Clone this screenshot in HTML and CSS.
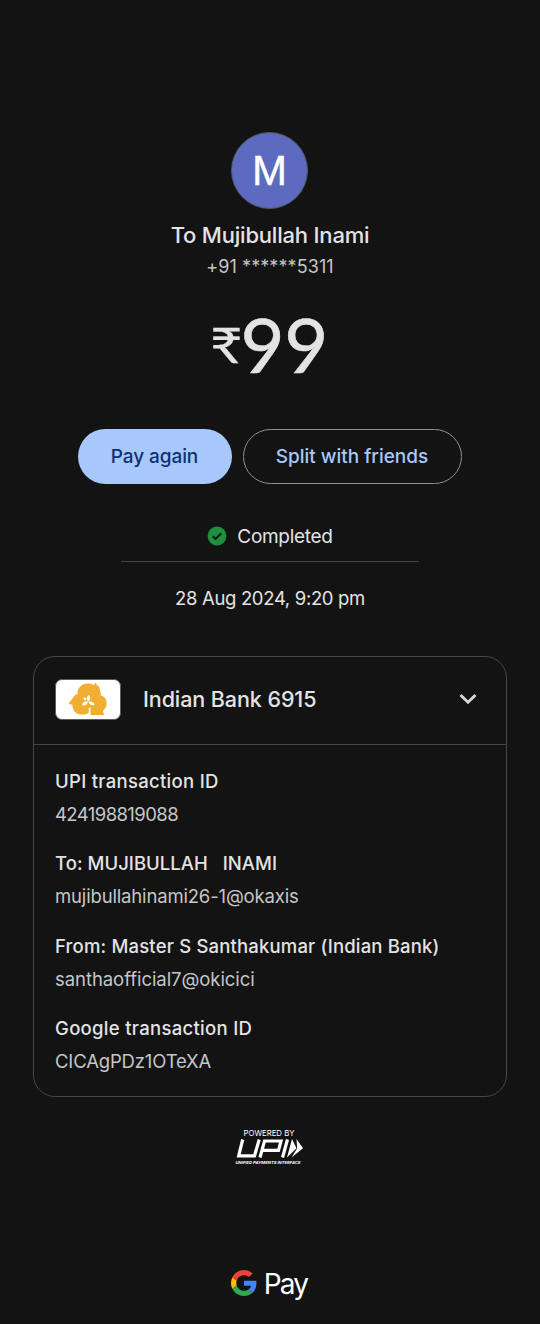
FILE: index.html
```html
<!DOCTYPE html>
<html lang="en">
<head>
<meta charset="utf-8">
<title>Payment receipt</title>
<link rel="stylesheet" href="styles.css">
</head>
<body>
<main class="screen">
  <div class="avatar">M</div>
  <h1 class="payee">To Mujibullah Inami</h1>
  <p class="phone">+91 ******5311</p>
  <p class="amount"><span class="rupee">₹</span><span class="value">99</span></p>
  <div class="actions">
    <button class="btn btn-primary">Pay again</button>
    <button class="btn btn-outline">Split with friends</button>
  </div>
  <div class="status">
    <svg class="check" viewBox="0 0 20 20"><circle cx="10" cy="10" r="9.4" fill="#1e9140"/><path d="M5.800 10.200l2.800 2.700 5.600-5.600" fill="none" stroke="#131314" stroke-width="2"/></svg>
    <span>Completed</span>
  </div>
  <p class="date">28 Aug 2024, 9:20 pm</p>
  <section class="card">
    <header class="bank">
      <span class="bank-logo">
        <svg viewBox="0 0 64 38">
          <g fill="#f2ae30">
            <path d="M21.500 15C20.500 8 26 3.500 32 3.500c2.500 0 4.500.6 6 1.600L39.700 2.500 41 5.200l2 1L45 14.500l-5 2-5 4-8 1z"/>
            <path d="M12.500 23.500L20 14l6 3 2 7 5 3-.5 6C29.500 34.800 25.500 35 22.500 34c-4-1.300-6-4.600-6-9z"/>
            <path d="M35 17.500l5-3 5 .8c4 1.500 6 5 5.600 9-.3 3-1.600 5-3.800 6.500l1.400 4.200H34.500V25z"/>
            <circle cx="32" cy="21" r="7"/>
          </g>
          <g fill="#fff">
            <path d="M32.300 21.500c-2-2-1.800-5 .3-6.500 2.300 1.500 2.300 4.500-.3 6.500z"/>
            <path d="M32 21.500c-.7 3-3 4.500-5.800 3.700.3-2.800 2.800-4.300 5.800-3.700z"/>
            <path d="M32.500 21.700c3-.9 5.600.4 6 3.200-2.900 1.100-5.300-.4-6-3.200z"/>
            <path d="M27.500 17.500l3 .5-.5 2.500-2.500-1z"/>
          </g>
          <path d="M33.500 30.500c0 2 .7 3 .7 5.500" fill="none" stroke="#fff" stroke-width=".8"/>
        </svg>
      </span>
      <span class="bank-name">Indian Bank 6915</span>
      <svg class="chevron" viewBox="0 0 18 12"><path d="M1.500 2l7.500 7.300L16.500 2" fill="none" stroke="#d6d6d6" stroke-width="2.900"/></svg>
    </header>
    <dl class="details">
      <div class="row"><dt class="wide">UPI transaction ID</dt><dd class="digits">424198819088</dd></div>
      <div class="row"><dt class="caps">To: MUJIBULLAH &nbsp; INAMI</dt><dd>mujibullahinami26-1@okaxis</dd></div>
      <div class="row"><dt>From: Master S Santhakumar (Indian Bank)</dt><dd class="loose">santhaofficial7@okicici</dd></div>
      <div class="row"><dt class="wide">Google transaction ID</dt><dd>CICAgPDz1OTeXA</dd></div>
    </dl>
  </section>
  <svg class="upi" viewBox="0 0 70 38">
    <text class="upi-top" x="8.500" y="7.500" textLength="51" lengthAdjust="spacingAndGlyphs">POWERED BY</text>
    <g fill="none" stroke="#fff" stroke-width="3.200">
      <path d="M7.700 11.500L3.700 27.800H19.500L24.200 11.500"/>
      <path d="M25 29.500L29.500 13H46L43.500 22.300H28"/>
      <path d="M52.500 11.500L47.500 29.500"/>
    </g>
    <path fill="#fff" d="M57 11l4.500 9.300-9.500 9.200z"/><path fill="#fff" d="M61.500 11l6.500 9.300L56.500 29.500l5.700-9.200z"/>
    <text class="upi-sub" x="0.500" y="35.500" textLength="65" lengthAdjust="spacingAndGlyphs">UNIFIED PAYMENTS INTERFACE</text>
  </svg>
  <footer class="gpay">
    <svg class="g" viewBox="0 0 48 48">
      <path fill="#4285f4" d="M46.980 24.550c0-1.570-.15-3.090-.38-4.550H24v9.020h12.940c-.58 2.960-2.260 5.480-4.780 7.180l7.730 6c4.510-4.180 7.090-10.360 7.090-17.650z"/>
      <path fill="#fbbc05" d="M10.530 28.590A14.500 14.500 0 0 1 9.770 24c0-1.600.27-3.140.76-4.590l-7.980-6.190A23.900 23.900 0 0 0 0 24c0 3.880.92 7.540 2.560 10.780z"/>
      <path fill="#ea4335" d="M24 9.500c3.540 0 6.710 1.220 9.210 3.600l6.850-6.850C35.900 2.380 30.470 0 24 0 14.620 0 6.510 5.380 2.560 13.220l7.980 6.190C12.430 13.720 17.740 9.500 24 9.500z"/>
      <path fill="#34a853" d="M24 48c6.480 0 11.930-2.130 15.890-5.810l-7.730-6c-2.150 1.450-4.920 2.300-8.160 2.300-6.260 0-11.570-4.220-13.470-9.910l-7.980 6.190C6.510 42.620 14.620 48 24 48z"/>
    </svg>
    <span class="pay">Pay</span>
  </footer>
</main>
</body>
</html>
```
FILE: styles.css
```css
* { box-sizing: border-box; margin: 0; padding: 0; }
body { background: #131314; font-family: Inter, "Liberation Sans", sans-serif; color: #e3e3e3; }
.screen { width: 540px; height: 1324px; padding-top: 132px; display: flex; flex-direction: column; align-items: center; white-space: nowrap; overflow: hidden; }
.avatar { width: 77px; height: 77px; margin-right: 1px; border-radius: 50%; background: #5c6bc0; border: 1px solid #55575f; display: grid; place-items: center; font: 400 42px/1 "Liberation Sans", sans-serif; -webkit-text-stroke: .4px #fff; color: #fff; }
.payee { margin-top: 11px; font-size: 22px; line-height: 30px; font-weight: 450; letter-spacing: -.2px; }
.phone { margin-top: 5px; font-size: 18px; line-height: 24px; color: #c4c7c5; letter-spacing: .08px; }
.amount { margin-top: 25px; height: 80px; display: flex; font-family: Lato, sans-serif; }
.rupee { font-size: 49px; line-height: 80px; transform: scaleX(1.14); -webkit-text-stroke: .3px #e3e3e3; }
.value { font-size: 76px; line-height: 79px; letter-spacing: -.5px; -webkit-text-stroke: .6px #e3e3e3; }
.actions { margin-top: 45px; margin-right: 1px; display: flex; gap: 11px; }
.btn { height: 55px; border-radius: 28px; font: 500 19px/1 Inter, sans-serif; }
.btn-primary { width: 154px; background: #a8c7fa; border: 0; color: #0b3272; letter-spacing: -.08px; }
.btn-outline { width: 219px; background: transparent; border: 1px solid #8e918f; color: #a8c7fa; letter-spacing: -.03px; }
.status { width: 298px; margin-top: 37px; height: 41px; border-bottom: 1px solid #444746; display: flex; justify-content: center; gap: 10px; font-size: 19px; line-height: 31px; letter-spacing: -.3px; }
.check { width: 20px; height: 20px; margin-top: 5px; }
.date { margin-top: 21px; font-size: 18.500px; line-height: 30px; letter-spacing: -.33px; }
.card { width: 474px; height: 441px; margin-top: 43px; border: 1px solid #444746; border-radius: 22px; }
.bank { height: 88px; padding: 0 29px 2px 21px; display: flex; align-items: center; border-bottom: 1px solid #444746; }
.bank-logo { width: 66px; height: 41px; border: 1px solid #5b5d60; border-radius: 7px; background: #fff; }
.bank-logo svg { display: block; width: 64px; height: 38px; }
.bank-name { margin-left: 22px; padding-bottom: 2px; font-size: 21.500px; font-weight: 450; letter-spacing: -.08px; }
.chevron { width: 18px; height: 12px; margin: 0 0 1px auto; }
.details { padding: 20px 21px; display: flex; flex-direction: column; gap: 17.300px; }
.row { height: 65px; }
.row dt { font-size: 18.500px; line-height: 32px; font-weight: 500; letter-spacing: .18px; }
.row dt.wide { letter-spacing: .3px; }
.row dt.caps { letter-spacing: .04px; }
.row dd { padding-top: 1px; font-size: 18.500px; line-height: 33px; color: #c4c7c5; letter-spacing: -.16px; }
.row dd.digits { letter-spacing: -.58px; }
.row dd.loose { letter-spacing: -.06px; }
.upi { width: 70px; height: 38px; margin-top: 31px; }
.upi-top { font: 400 8px Inter, sans-serif; fill: #fff; }
.upi-sub { font: italic 700 4px Inter, sans-serif; fill: #fff; }
.gpay { margin-top: 97px; margin-right: 2px; height: 40px; display: flex; align-items: center; gap: 7px; }
.g { width: 26px; height: 26px; }
.pay { font-size: 28px; line-height: 40px; padding-top: 1px; letter-spacing: -1.800px; color: #fff; }
```
